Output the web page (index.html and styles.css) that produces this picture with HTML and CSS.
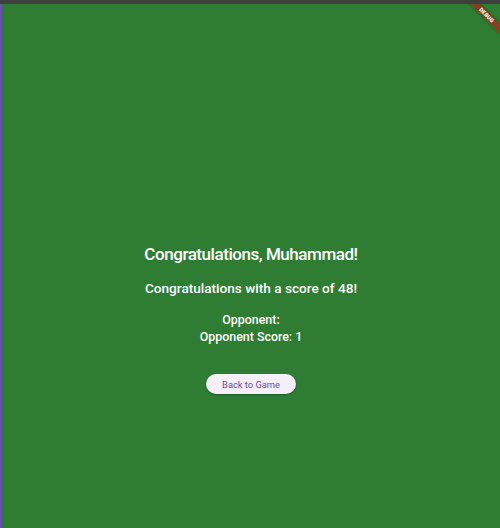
FILE: index.html
```html
<!DOCTYPE html>
<html>
<head>
<meta charset="utf-8">
<link rel="stylesheet" href="styles.css">
</head>
<body>
<div class="frame">
  <div class="topbar"></div>
  <div class="row">
    <div class="edge"></div>
    <main class="app">
      <div class="content">
        <h1 class="title">Congratulations, Muhammad!</h1>
        <p class="subtitle">Congratulations with a score of 48!</p>
        <div class="opponent">
          <p class="line">Opponent:</p>
          <p class="line">Opponent Score: 1</p>
        </div>
        <button class="back-btn">Back to Game</button>
      </div>
      <div class="debug-banner">DEBUG</div>
    </main>
  </div>
</div>
</body>
</html>
```
FILE: styles.css
```css
* { box-sizing: border-box; }
html, body { margin: 0; padding: 0; }
body {
  width: 500px;
  height: 528px;
  overflow: hidden;
  font-family: Roboto, "Noto Sans", sans-serif;
}
.frame {
  display: flex;
  flex-direction: column;
  width: 500px;
  height: 528px;
}
.topbar {
  height: 4px;
  background: #3f3f3f;
  flex: none;
}
.row {
  flex: 1;
  display: flex;
}
.edge {
  width: 2px;
  background: #7048c0;
  flex: none;
}
.app {
  flex: 1;
  position: relative;
  overflow: hidden;
  background: #2e7d32;
}
.content {
  display: flex;
  flex-direction: column;
  align-items: center;
  padding-top: 238px;
  color: #ffffff;
}
.title {
  margin: 0;
  font-size: 17px;
  font-weight: 500;
  letter-spacing: -0.45px;
  line-height: 24px;
}
.subtitle {
  margin: 12px 0 0;
  font-size: 13.6px;
  font-weight: 500;
  line-height: 20px;
}
.opponent {
  margin-top: 13px;
  display: flex;
  flex-direction: column;
  align-items: center;
}
.line {
  margin: 0;
  font-size: 12.4px;
  font-weight: 500;
  line-height: 17px;
}
.back-btn {
  margin-top: 29px;
  width: 90px;
  height: 20px;
  border: none;
  border-radius: 10px;
  background: #f5effa;
  color: #6750a4;
  font-family: Roboto, sans-serif;
  font-size: 9.3px;
  font-weight: 400;
  padding: 0;
  box-shadow: 0 1px 2px rgba(0,0,0,0.3);
}
.debug-banner {
  position: absolute;
  top: 8px;
  right: -8px;
  width: 43px;
  height: 6.5px;
  background: rgba(183, 28, 28, 0.63);
  color: #fff;
  font-size: 5.5px;
  font-weight: 900;
  line-height: 6.5px;
  text-align: center;
  letter-spacing: 0.2px;
  transform: rotate(45deg);
  box-shadow: 0 0 3px rgba(0,0,0,0.4);
}
```
